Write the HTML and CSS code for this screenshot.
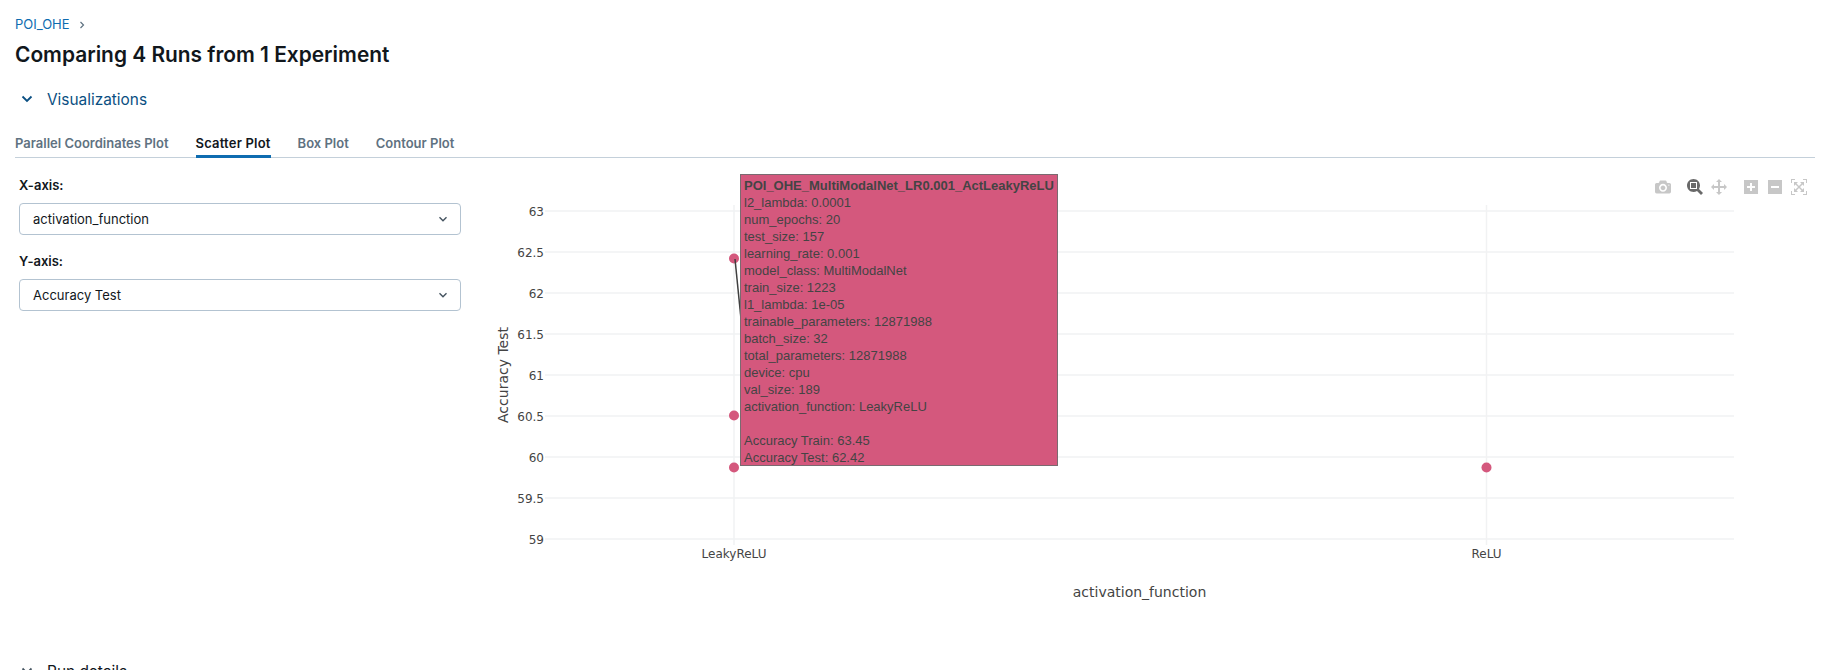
FILE: index.html
```html
<!DOCTYPE html>
<html>
<head lang="en">
    <meta charset="UTF-8">
    <title>Comparing 4 Runs from 1 Experiment</title>
    <link rel="stylesheet" href="styles.css">
</head>
<body>
    <div id="page">
        <div class="crumbs">
            <a class="crumb-link">POI_OHE</a>
            <svg class="crumb-sep" width="10" height="10" viewBox="0 0 10 10"><path d="M3.5 2l3 3-3 3" fill="none" stroke="#5f7281" stroke-width="1.2"/></svg>
        </div>
        <h1 class="title">Comparing 4 Runs from 1 Experiment</h1>
        <div class="section-head viz-head">
            <svg class="section-chevron" width="12" height="12" viewBox="0 0 12 12"><path d="M1.5 3.5L6 8l4.5-4.5" fill="none" stroke="currentColor" stroke-width="1.8"/></svg>
            <span>Visualizations</span>
        </div>
        <ul class="tabs">
            <li>Parallel Coordinates Plot</li>
            <li class="selected">Scatter Plot</li>
            <li>Box Plot</li>
            <li>Contour Plot</li>
        </ul>
        <div class="panel">
            <div class="controls">
                <label class="field-label">X-axis:</label>
                <div class="select">
                    <span>activation_function</span>
                    <svg width="10" height="10" viewBox="0 0 10 10"><path d="M1.5 3.2L5 6.7l3.5-3.5" fill="none" stroke="#44535f" stroke-width="1.4"/></svg>
                </div>
                <label class="field-label">Y-axis:</label>
                <div class="select">
                    <span>Accuracy Test</span>
                    <svg width="10" height="10" viewBox="0 0 10 10"><path d="M1.5 3.2L5 6.7l3.5-3.5" fill="none" stroke="#44535f" stroke-width="1.4"/></svg>
                </div>
            </div>
            <div class="plot">
                <svg class="chart" width="1345" height="480" viewBox="480 165 1345 480">
                    <g class="grid">
                        <line x1="545" x2="1734" y1="210" y2="210"/>
                        <line x1="545" x2="1734" y1="251" y2="251"/>
                        <line x1="545" x2="1734" y1="292" y2="292"/>
                        <line x1="545" x2="1734" y1="333" y2="333"/>
                        <line x1="545" x2="1734" y1="374" y2="374"/>
                        <line x1="545" x2="1734" y1="415" y2="415"/>
                        <line x1="545" x2="1734" y1="456" y2="456"/>
                        <line x1="545" x2="1734" y1="497" y2="497"/>
                        <line x1="545" x2="1734" y1="538" y2="538"/>
                        <line x1="734" x2="734" y1="204" y2="544"/>
                        <line x1="1486.5" x2="1486.5" y1="204" y2="544"/>
                    </g>
                    <g class="ticks-y">
                        <text x="544" y="214.5">63</text>
                        <text x="544" y="255.5">62.5</text>
                        <text x="544" y="296.5">62</text>
                        <text x="544" y="337.5">61.5</text>
                        <text x="544" y="378.5">61</text>
                        <text x="544" y="419.5">60.5</text>
                        <text x="544" y="460.5">60</text>
                        <text x="544" y="501.5">59.5</text>
                        <text x="544" y="542.5">59</text>
                    </g>
                    <g class="ticks-x">
                        <text x="734" y="557">LeakyReLU</text>
                        <text x="1486.5" y="557">ReLU</text>
                    </g>
                    <text class="axis-title" x="1139.5" y="596">activation_function</text>
                    <text class="axis-title" transform="translate(508 374) rotate(-90)">Accuracy Test</text>
                    <g class="points">
                        <circle cx="734" cy="257.5" r="5"/>
                        <circle cx="734" cy="414.5" r="5"/>
                        <circle cx="734" cy="466.5" r="5"/>
                        <circle cx="1486.5" cy="466.5" r="5"/>
                    </g>
                    <line class="hover-line" x1="735" y1="258" x2="741.5" y2="323"/>
                </svg>
                <div class="hover-box">
                    <div class="hover-name">POI_OHE_MultiModalNet_LR0.001_ActLeakyReLU</div>
                    <div>l2_lambda: 0.0001</div>
                    <div>num_epochs: 20</div>
                    <div>test_size: 157</div>
                    <div>learning_rate: 0.001</div>
                    <div>model_class: MultiModalNet</div>
                    <div>train_size: 1223</div>
                    <div>l1_lambda: 1e-05</div>
                    <div>trainable_parameters: 12871988</div>
                    <div>batch_size: 32</div>
                    <div>total_parameters: 12871988</div>
                    <div>device: cpu</div>
                    <div>val_size: 189</div>
                    <div>activation_function: LeakyReLU</div>
                    <div>&nbsp;</div>
                    <div>Accuracy Train: 63.45</div>
                    <div>Accuracy Test: 62.42</div>
                </div>
                <div class="modebar">
                    <svg class="mode-icon" viewBox="0 0 1000 1000"><path transform="matrix(1 0 0 -1 0 850)" d="M500 450c-83 0-150-67-150-150 0-83 67-150 150-150 83 0 150 67 150 150 0 83-67 150-150 150z m400 150h-120c-16 0-34 13-39 29l-31 93c-6 15-23 28-40 28h-340c-16 0-34-13-39-28l-31-94c-6-15-23-28-40-28h-120c-55 0-100-45-100-100v-450c0-55 45-100 100-100h800c55 0 100 45 100 100v450c0 55-45 100-100 100z m-400-550c-138 0-250 112-250 250 0 138 112 250 250 250 138 0 250-112 250-250 0-138-112-250-250-250z m365 380c-19 0-35 16-35 35 0 19 16 35 35 35 19 0 35-16 35-35 0-19-16-35-35-35z"/></svg>
                    <svg class="mode-icon active" viewBox="0 0 1000 1000"><path transform="matrix(1 0 0 -1 0 850)" d="m1000-25l-250 251c40 63 63 138 63 218 0 224-182 406-407 406-224 0-406-182-406-406s183-406 407-406c80 0 155 22 218 62l250-250 125 125z m-812 250l0 438 437 0 0-438-437 0z m62 375l313 0 0-312-313 0 0 312z"/></svg>
                    <svg class="mode-icon" viewBox="0 0 1000 1000"><path transform="matrix(1 0 0 -1 0 850)" d="m1000 350l-187 188 0-125-250 0 0 250 125 0-188 187-187-187 125 0 0-250-250 0 0 125-188-188 186-187 0 125 252 0 0-250-125 0 187-188 188 188-125 0 0 250 250 0 0-126 187 188z"/></svg>
                    <svg class="mode-icon group-start" viewBox="0 0 875 1000"><path transform="matrix(1 0 0 -1 0 850)" d="m1 787l0-875 875 0 0 875-875 0z m687-500l-187 0 0-187-125 0 0 187-188 0 0 125 188 0 0 187 125 0 0-187 187 0 0-125z"/></svg>
                    <svg class="mode-icon" viewBox="0 0 875 1000"><path transform="matrix(1 0 0 -1 0 850)" d="m0 788l0-876 875 0 0 876-875 0z m688-500l-500 0 0 125 500 0 0-125z"/></svg>
                    <svg class="mode-icon" viewBox="0 0 1000 1000"><path transform="matrix(1 0 0 -1 0 850)" d="m250 850l-187 0-63 0 0-62 0-188 63 0 0 188 187 0 0 62z m688 0l-188 0 0-62 188 0 0-188 62 0 0 188 0 62-62 0z m-875-938l0 188-63 0 0-188 0-62 63 0 187 0 0 62-187 0z m875 188l0-188-188 0 0-62 188 0 62 0 0 62 0 188-62 0z m-125 188l-1 0-93-94-156 156 156 156 92-93 2 0 0 250-250 0 0-2 93-92-156-156-156 156 94 92 0 2-250 0 0-250 0 0 93 93 157-156-157-156-93 94 0 0 0-250 250 0 0 0-94 93 156 157 156-157-93-93 0-0 250 0 0 250z"/></svg>
                </div>
            </div>
        </div>
        <div class="section-head run-head">
            <svg class="section-chevron" width="12" height="12" viewBox="0 0 12 12"><path d="M1.5 3.5L6 8l4.5-4.5" fill="none" stroke="currentColor" stroke-width="1.8"/></svg>
            <span>Run details</span>
        </div>
    </div>
</body>
</html>
```

FILE: styles.css
```css
*{
    margin: 0;
    padding: 0;
    box-sizing: border-box;
}
html,body{
    height: 670px;
    overflow: hidden;
    background: #FFFFFF;
}
body{
    font-family: Inter, "Noto Sans", sans-serif;
    color: #11171c;
}
li{
    list-style: none;
}
#page{
    padding: 16px 10px 0 15px;
}
.crumbs{
    display: flex;
    align-items: center;
    gap: 7px;
    height: 17px;
    font-size: 13px;
    line-height: 17px;
}
.crumb-link{
    color: #0e6cb0;
}
.title{
    margin-top: 8px;
    font-size: 20.9px;
    line-height: 28px;
    font-weight: 600;
    color: #11171c;
}
.section-head{
    display: flex;
    align-items: center;
    gap: 14px;
    padding-left: 6px;
    height: 24px;
    font-size: 15.4px;
}
.section-chevron{
    flex: none;
}
.viz-head{
    margin-top: 18px;
    color: #0a4f82;
}
.run-head{
    color: #11171c;
}
.run-head .section-chevron{
    color: #44535f;
}
.tabs{
    display: flex;
    gap: 27px;
    margin-top: 14px;
    height: 33px;
    border-bottom: 1px solid #c4d0da;
    font-size: 13px;
    font-weight: 600;
    line-height: 37px;
    color: #5f7281;
}
.tabs li{
    height: 33px;
}
.tabs .selected{
    color: #11171c;
    letter-spacing: 0.2px;
    border-bottom: 3px solid #0e6cb0;
}
.panel{
    display: flex;
    height: 501px;
}
.controls{
    width: 442px;
    margin-left: 4px;
    padding-top: 18px;
    flex: none;
}
.field-label{
    display: block;
    height: 18px;
    font-size: 13px;
    font-weight: 600;
    line-height: 18px;
    color: #11171c;
}
.select{
    display: flex;
    align-items: center;
    justify-content: space-between;
    height: 32px;
    margin: 9px 0 17px;
    padding: 0 12px 0 13px;
    border: 1px solid #b3c3d1;
    border-radius: 4px;
    font-size: 13px;
}
.plot{
    position: relative;
    flex: 1;
}
.chart{
    position: absolute;
    left: 19px;
    top: 8px;
}
.grid line{
    stroke: #f1f2f3;
    stroke-width: 1.5;
}
.ticks-y text,.ticks-x text,.axis-title{
    font-family: "DejaVu Sans", sans-serif;
    fill: #444444;
}
.ticks-y text{
    font-size: 12px;
    text-anchor: end;
}
.ticks-x text{
    font-size: 12px;
    text-anchor: middle;
}
.axis-title{
    font-size: 14px;
    text-anchor: middle;
}
.points circle{
    fill: #d4587d;
}
.hover-line{
    stroke: #3f3f3f;
    stroke-width: 1.5;
}
.hover-box{
    position: absolute;
    left: 279px;
    top: 16px;
    width: 318px;
    height: 292px;
    padding: 2px 3px;
    background: #d4587d;
    border: 1px solid #7a6a70;
    font-family: "Liberation Sans", Arial, sans-serif;
    font-size: 13px;
    line-height: 17px;
    color: #444444;
    white-space: nowrap;
}
.hover-name{
    font-weight: bold;
}
.modebar{
    position: absolute;
    top: 21px;
    right: 8px;
    display: flex;
    align-items: center;
}
.mode-icon{
    width: 16px;
    height: 16px;
    margin-left: 8px;
    fill: rgba(68,68,68,0.3);
}
.mode-icon.active{
    fill: rgba(68,68,68,0.8);
    margin-left: 16px;
}
.mode-icon.group-start{
    margin-left: 16px;
}
```
